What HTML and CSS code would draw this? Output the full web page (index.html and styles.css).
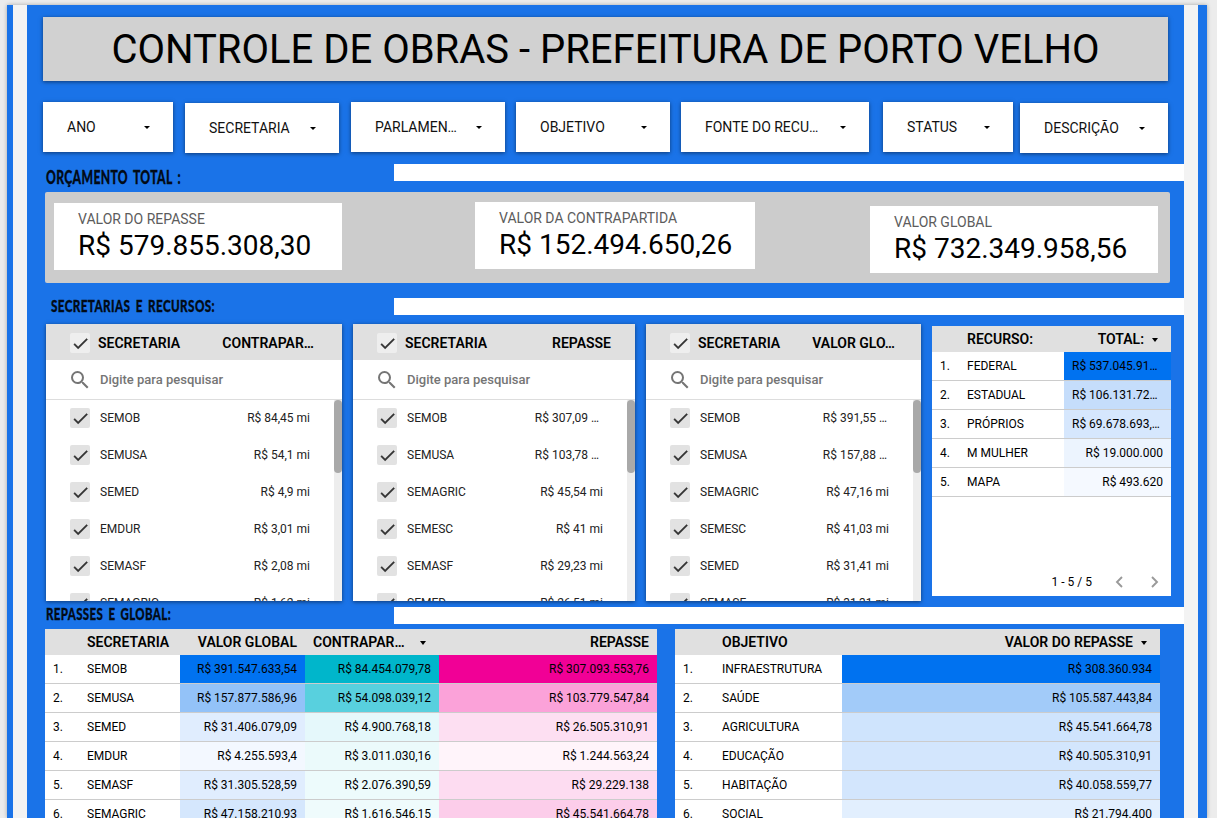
FILE: index.html
```html
<!DOCTYPE html>
<html lang="pt-BR">
<head>
<meta charset="utf-8">
<title>Controle de Obras</title>
<link rel="stylesheet" href="styles.css">
</head>
<body>
<svg class="defs" aria-hidden="true">
  <symbol id="check" viewBox="0 0 24 24"><path d="M9 16.17L4.83 12l-1.42 1.41L9 19 21 7l-1.41-1.41z"/></symbol>
  <symbol id="search" viewBox="0 0 24 24"><path d="M15.5 14h-.79l-.28-.27A6.47 6.47 0 0 0 16 9.5 6.5 6.5 0 1 0 9.5 16c1.61 0 3.09-.59 4.23-1.57l.27.28v.79l5 4.99L20.49 19l-4.99-5zm-6 0C7.01 14 5 11.99 5 9.5S7.01 5 9.5 5 14 7.01 14 9.5 11.99 14 9.5 14z"/></symbol>
</svg>
<div class="canvas">
  <div class="stripe"></div>
  <main class="report">
    <h1 class="title"><span>CONTROLE DE OBRAS - PREFEITURA DE PORTO VELHO</span></h1>

    <div class="filters">
      <div class="filter f-ano"><span>ANO</span><i class="caret"></i></div>
      <div class="filter f-sec low"><span>SECRETARIA</span><i class="caret"></i></div>
      <div class="filter f-par"><span>PARLAMEN…</span><i class="caret"></i></div>
      <div class="filter f-obj"><span>OBJETIVO</span><i class="caret"></i></div>
      <div class="filter f-fon"><span>FONTE DO RECU…</span><i class="caret"></i></div>
      <div class="filter f-sta"><span>STATUS</span><i class="caret"></i></div>
      <div class="filter f-des low"><span>DESCRIÇÃO</span><i class="caret"></i></div>
    </div>

    <div class="section s1">
      <svg class="heading" width="367" height="28"><text x="19" y="20" font-size="18" textLength="135" lengthAdjust="spacingAndGlyphs">ORÇAMENTO TOTAL :</text></svg>
      <div class="bar"></div>
    </div>

    <div class="kpis">
      <div class="kpi k1"><span class="kpi-label">VALOR DO REPASSE</span><span class="kpi-value">R$ 579.855.308,30</span></div>
      <div class="kpi k2"><span class="kpi-label">VALOR DA CONTRAPARTIDA</span><span class="kpi-value">R$ 152.494.650,26</span></div>
      <div class="kpi k3"><span class="kpi-label">VALOR GLOBAL</span><span class="kpi-value">R$ 732.349.958,56</span></div>
    </div>

    <div class="section s2">
      <svg class="heading" width="367" height="26"><text x="24" y="14" font-size="16" textLength="164" lengthAdjust="spacingAndGlyphs">SECRETARIAS E RECURSOS:</text></svg>
      <div class="bar"></div>
    </div>

    <div class="lists">
      <div class="list l1">
        <div class="list-head"><span class="box"><svg><use href="#check"/></svg></span><b>SECRETARIA</b><b class="num">CONTRAPAR…</b></div>
        <div class="list-search"><svg><use href="#search"/></svg><span>Digite para pesquisar</span></div>
        <div class="list-body">
          <div class="items">
            <div class="item"><span class="box"><svg><use href="#check"/></svg></span><span>SEMOB</span><span class="num">R$ 84,45 mi</span></div>
            <div class="item"><span class="box"><svg><use href="#check"/></svg></span><span>SEMUSA</span><span class="num">R$ 54,1 mi</span></div>
            <div class="item"><span class="box"><svg><use href="#check"/></svg></span><span>SEMED</span><span class="num">R$ 4,9 mi</span></div>
            <div class="item"><span class="box"><svg><use href="#check"/></svg></span><span>EMDUR</span><span class="num">R$ 3,01 mi</span></div>
            <div class="item"><span class="box"><svg><use href="#check"/></svg></span><span>SEMASF</span><span class="num">R$ 2,08 mi</span></div>
            <div class="item"><span class="box"><svg><use href="#check"/></svg></span><span>SEMAGRIC</span><span class="num">R$ 1,62 mi</span></div>
          </div>
          <div class="track"><div class="thumb"></div></div>
        </div>
      </div>
      <div class="list l2">
        <div class="list-head"><span class="box"><svg><use href="#check"/></svg></span><b>SECRETARIA</b><b class="num">REPASSE</b></div>
        <div class="list-search"><svg><use href="#search"/></svg><span>Digite para pesquisar</span></div>
        <div class="list-body">
          <div class="items">
            <div class="item"><span class="box"><svg><use href="#check"/></svg></span><span>SEMOB</span><span class="num cut">R$ 307,09 …</span></div>
            <div class="item"><span class="box"><svg><use href="#check"/></svg></span><span>SEMUSA</span><span class="num cut">R$ 103,78 …</span></div>
            <div class="item"><span class="box"><svg><use href="#check"/></svg></span><span>SEMAGRIC</span><span class="num">R$ 45,54 mi</span></div>
            <div class="item"><span class="box"><svg><use href="#check"/></svg></span><span>SEMESC</span><span class="num">R$ 41 mi</span></div>
            <div class="item"><span class="box"><svg><use href="#check"/></svg></span><span>SEMASF</span><span class="num">R$ 29,23 mi</span></div>
            <div class="item"><span class="box"><svg><use href="#check"/></svg></span><span>SEMED</span><span class="num">R$ 26,51 mi</span></div>
          </div>
          <div class="track"><div class="thumb"></div></div>
        </div>
      </div>
      <div class="list l3">
        <div class="list-head"><span class="box"><svg><use href="#check"/></svg></span><b>SECRETARIA</b><b class="num">VALOR GLO…</b></div>
        <div class="list-search"><svg><use href="#search"/></svg><span>Digite para pesquisar</span></div>
        <div class="list-body">
          <div class="items">
            <div class="item"><span class="box"><svg><use href="#check"/></svg></span><span>SEMOB</span><span class="num cut">R$ 391,55 …</span></div>
            <div class="item"><span class="box"><svg><use href="#check"/></svg></span><span>SEMUSA</span><span class="num cut">R$ 157,88 …</span></div>
            <div class="item"><span class="box"><svg><use href="#check"/></svg></span><span>SEMAGRIC</span><span class="num">R$ 47,16 mi</span></div>
            <div class="item"><span class="box"><svg><use href="#check"/></svg></span><span>SEMESC</span><span class="num">R$ 41,03 mi</span></div>
            <div class="item"><span class="box"><svg><use href="#check"/></svg></span><span>SEMED</span><span class="num">R$ 31,41 mi</span></div>
            <div class="item"><span class="box"><svg><use href="#check"/></svg></span><span>SEMASF</span><span class="num">R$ 31,31 mi</span></div>
          </div>
          <div class="track"><div class="thumb"></div></div>
        </div>
      </div>
      <div class="table t-rec">
        <div class="thead"><span></span><span>RECURSO:</span><span class="num sorted">TOTAL:<i class="caret"></i></span></div>
        <div class="row"><span>1.</span><span>FEDERAL</span><span class="num clip" style="background:#0072f0">R$ 537.045.91…</span></div>
        <div class="row"><span>2.</span><span>ESTADUAL</span><span class="num clip" style="background:#c5ddfb">R$ 106.131.72…</span></div>
        <div class="row"><span>3.</span><span>PRÓPRIOS</span><span class="num clip" style="background:#d6e7fd">R$ 69.678.693,…</span></div>
        <div class="row"><span>4.</span><span>M MULHER</span><span class="num" style="background:#ecf4fe">R$ 19.000.000</span></div>
        <div class="row"><span>5.</span><span>MAPA</span><span class="num" style="background:#f5f9ff">R$ 493.620</span></div>
        <div class="pager"><span>1 - 5 / 5</span>
          <svg class="arrow" viewBox="0 0 8 12"><path d="M7 1L2 6l5 5"/></svg>
          <svg class="arrow" viewBox="0 0 8 12"><path d="M1 1l5 5-5 5"/></svg>
        </div>
      </div>
    </div>

    <div class="section s3">
      <svg class="heading" width="367" height="22"><text x="19" y="13" font-size="16" textLength="125" lengthAdjust="spacingAndGlyphs">REPASSES E GLOBAL:</text></svg>
      <div class="bar"></div>
    </div>

    <div class="tables">
      <div class="table t-sec">
        <div class="thead"><span></span><span>SECRETARIA</span><span class="num">VALOR GLOBAL</span><span class="contra">CONTRAPAR…<i class="caret"></i></span><span class="num">REPASSE</span></div>
        <div class="row"><span>1.</span><span>SEMOB</span><span class="num" style="background:#0072f0">R$ 391.547.633,54</span><span class="num" style="background:#00b6cb">R$ 84.454.079,78</span><span class="num" style="background:#f10096">R$ 307.093.553,76</span></div>
        <div class="row"><span>2.</span><span>SEMUSA</span><span class="num" style="background:#93c2f8">R$ 157.877.586,96</span><span class="num" style="background:#58d0de">R$ 54.098.039,12</span><span class="num" style="background:#fba2d9">R$ 103.779.547,84</span></div>
        <div class="row"><span>3.</span><span>SEMED</span><span class="num" style="background:#e0edfe">R$ 31.406.079,09</span><span class="num" style="background:#e5f8fb">R$ 4.900.768,18</span><span class="num" style="background:#fddff2">R$ 26.505.310,91</span></div>
        <div class="row"><span>4.</span><span>EMDUR</span><span class="num" style="background:#f3f8ff">R$ 4.255.593,4</span><span class="num" style="background:#ebfafb">R$ 3.011.030,16</span><span class="num" style="background:#fff4fa">R$ 1.244.563,24</span></div>
        <div class="row"><span>5.</span><span>SEMASF</span><span class="num" style="background:#e0edfe">R$ 31.305.528,59</span><span class="num" style="background:#edfbfc">R$ 2.076.390,59</span><span class="num" style="background:#fddcf1">R$ 29.229.138</span></div>
        <div class="row"><span>6.</span><span>SEMAGRIC</span><span class="num" style="background:#d5e7fd">R$ 47.158.210,93</span><span class="num" style="background:#effbfc">R$ 1.616.546,15</span><span class="num" style="background:#fccdea">R$ 45.541.664,78</span></div>
      </div>
      <div class="table t-obj">
        <div class="thead"><span></span><span>OBJETIVO</span><span class="num sorted">VALOR DO REPASSE<i class="caret"></i></span></div>
        <div class="row"><span>1.</span><span>INFRAESTRUTURA</span><span class="num" style="background:#0072f0">R$ 308.360.934</span></div>
        <div class="row"><span>2.</span><span>SAÚDE</span><span class="num" style="background:#a2cbf9">R$ 105.587.443,84</span></div>
        <div class="row"><span>3.</span><span>AGRICULTURA</span><span class="num" style="background:#cfe4fd">R$ 45.541.664,78</span></div>
        <div class="row"><span>4.</span><span>EDUCAÇÃO</span><span class="num" style="background:#d3e6fd">R$ 40.505.310,91</span></div>
        <div class="row"><span>5.</span><span>HABITAÇÃO</span><span class="num" style="background:#d3e6fd">R$ 40.058.559,77</span></div>
        <div class="row"><span>6.</span><span>SOCIAL</span><span class="num" style="background:#e2effe">R$ 21.794.400</span></div>
      </div>
    </div>
  </main>
  <div class="stripe"></div>
</div>
</body>
</html>
```
FILE: styles.css
```css
* { box-sizing: border-box; }
html, body { height: 100%; }
body {
  margin: 0;
  padding: 5px 10px 0 7px;
  overflow: hidden;
  background: #ececec;
  font-family: Roboto, "Liberation Sans", sans-serif;
  color: #000;
}
.defs { display: none; }

.canvas {
  display: flex;
  width: 1200px;
  height: 813px;
  padding: 0 9px 0 6px;
  overflow: hidden;
  background: #1a73e8;
  box-shadow: 0 0 4px rgba(0, 0, 0, .3);
}
.stripe { flex: 0 0 14px; background: #f3f3f3; }
.report { flex: 0 0 1157px; display: flex; flex-direction: column; }
.report > * { flex-shrink: 0; }

.title {
  display: flex;
  align-items: center;
  justify-content: center;
  height: 64px;
  margin: 12px 16px 0;
  background: #d1d1d1;
  box-shadow: 0 1px 4px rgba(0, 0, 0, .5);
  font-size: 40px;
  font-weight: 400;
  white-space: nowrap;
}

/* filter row */
.filters { display: flex; height: 51px; margin: 21px 16px 0; }
.filter {
  display: flex;
  align-items: center;
  justify-content: space-between;
  height: 50px;
  padding: 0 23px 0 24px;
  background: #fff;
  box-shadow: 0 1px 4px rgba(0, 0, 0, .5);
  font-size: 14px;
  color: #111;
  white-space: nowrap;
}
.low { margin-top: 1px; }
.f-ano { width: 130px; margin-right: 12px; }
.f-sec { width: 154px; margin-right: 12px; }
.f-par { width: 154px; margin-right: 11px; }
.f-obj { width: 154px; margin-right: 11px; }
.f-fon { width: 188px; margin-right: 14px; }
.f-sta { width: 130px; margin-right: 7px; }
.f-des { width: 148px; }
.caret {
  border: 3px solid transparent;
  border-top-color: #000;
  border-bottom: 0;
}

/* section headings */
.section { display: flex; }
.heading {
  display: block;
  font-family: Lato, "Open Sans", sans-serif;
  font-weight: 900;
  word-spacing: 3px;
  letter-spacing: .5px;
  fill: #020b16;
  stroke: #020b16;
  stroke-width: .3;
}
.bar { flex: 1; height: 17px; background: #fff; }
.s1 { height: 28px; margin-top: 11px; }
.s2 { height: 26px; margin-top: 15px; }
.s3 { height: 22px; margin-top: 6px; }

/* totals */
.kpis {
  display: flex;
  height: 91px;
  margin: 0 14px 0 18px;
  padding-left: 9px;
  background: #ccc;
  border-radius: 2px;
}
.kpi {
  display: flex;
  flex-direction: column;
  height: 67px;
  padding: 8px 24px 0;
  background: #fff;
  white-space: nowrap;
}
.k1 { width: 288px; margin: 11px 133px 0 0; }
.k2 { width: 280px; margin: 10px 115px 0 0; }
.k3 { width: 288px; margin-top: 14px; }
.kpi-label { font-size: 14px; line-height: 16px; color: #5c5c5c; }
.kpi-value { font-size: 28px; line-height: 38px; }

/* selectable lists */
.lists { display: flex; height: 277px; padding-left: 19px; }
.list {
  display: flex;
  flex-direction: column;
  height: 277px;
  margin-right: 11px;
  overflow: hidden;
  background: #fff;
  box-shadow: 0 1px 4px rgba(0, 0, 0, .5);
}
.l1 { width: 296px; }
.l2 { width: 282px; }
.l3 { width: 275px; }
.num { margin-left: auto; text-align: right; white-space: nowrap; }
.list-head {
  display: flex;
  flex: 0 0 36px;
  padding: 9px 24px 0;
  background: #e0e0e0;
  font-size: 14px;
  line-height: 20px;
}
.list-head b { font-weight: 600; }
.l1 .list-head { padding-right: 28px; }
.l3 .list-head { padding-right: 26px; }
.list-head .box { margin-right: 8px; background: #eee; }
.box {
  display: flex;
  align-items: center;
  justify-content: center;
  flex: 0 0 20px;
  height: 20px;
  background: #e2e2e2;
  border-radius: 2px;
}
.box svg { width: 19px; height: 19px; fill: #333; stroke: #333; stroke-width: .5; }
.list-search {
  display: flex;
  flex: 0 0 40px;
  padding: 8px 0 0 22px;
  border-bottom: 1px solid #ddd;
  font-size: 13px;
  font-weight: 500;
  line-height: 24px;
  color: #757575;
}
.list-search svg { width: 24px; height: 24px; margin-right: 8px; fill: #757575; }
.list-body { display: flex; flex: 1; min-height: 0; overflow: hidden; }
.items { flex: 1; padding: 0 24px; }
.item {
  display: flex;
  height: 37px;
  padding-top: 8px;
  font-size: 12px;
  line-height: 20px;
  color: #222;
}
.item .box { margin-right: 10px; }
.cut { padding-right: 4px; }
.l3 .cut { padding-right: 2px; }
.track { flex: 0 0 8px; background: #ededed; }
.thumb { height: 73px; border-radius: 4px; background: #a9a9a9; }

/* tables */
.table { background: #fff; font-size: 12px; }
.thead, .row { display: grid; }
.thead {
  height: 26px;
  background: #e0e0e0;
  font-size: 14px;
  font-weight: 600;
  line-height: 26px;
}
.row { height: 29px; border-bottom: 1px solid #ccc; line-height: 28px; }
.thead span, .row span { padding: 0 8px; white-space: nowrap; }
.thead .num, .row .num { margin: 0; }
.sorted .caret, .contra .caret { display: inline-block; border-width: 4px 3px 0; vertical-align: 2px; }
.sorted .caret { margin: 0 5px 0 8px; }
.contra .caret { margin-left: 15px; }
.t-rec { width: 239px; height: 270px; margin-top: 2px; display: flex; flex-direction: column; }
.t-rec .thead, .t-rec .row { grid-template-columns: 27px 105px 107px; }
.t-rec .clip { text-align: left; }
.pager {
  display: flex;
  align-items: center;
  justify-content: flex-end;
  height: 28px;
  margin-top: auto;
  padding-right: 12px;
}
.arrow { width: 8px; height: 12px; margin-left: 23px; fill: none; stroke: #999; stroke-width: 1.9; }
.arrow + .arrow { margin-left: 28px; }

.tables { display: flex; gap: 18px; padding-left: 18px; }
.t-sec { width: 612px; }
.t-sec .thead, .t-sec .row { grid-template-columns: 34px 101px 125px 134px 218px; }
.t-obj { width: 485px; }
.t-obj .thead, .t-obj .row { grid-template-columns: 39px 128px 318px; }
```
